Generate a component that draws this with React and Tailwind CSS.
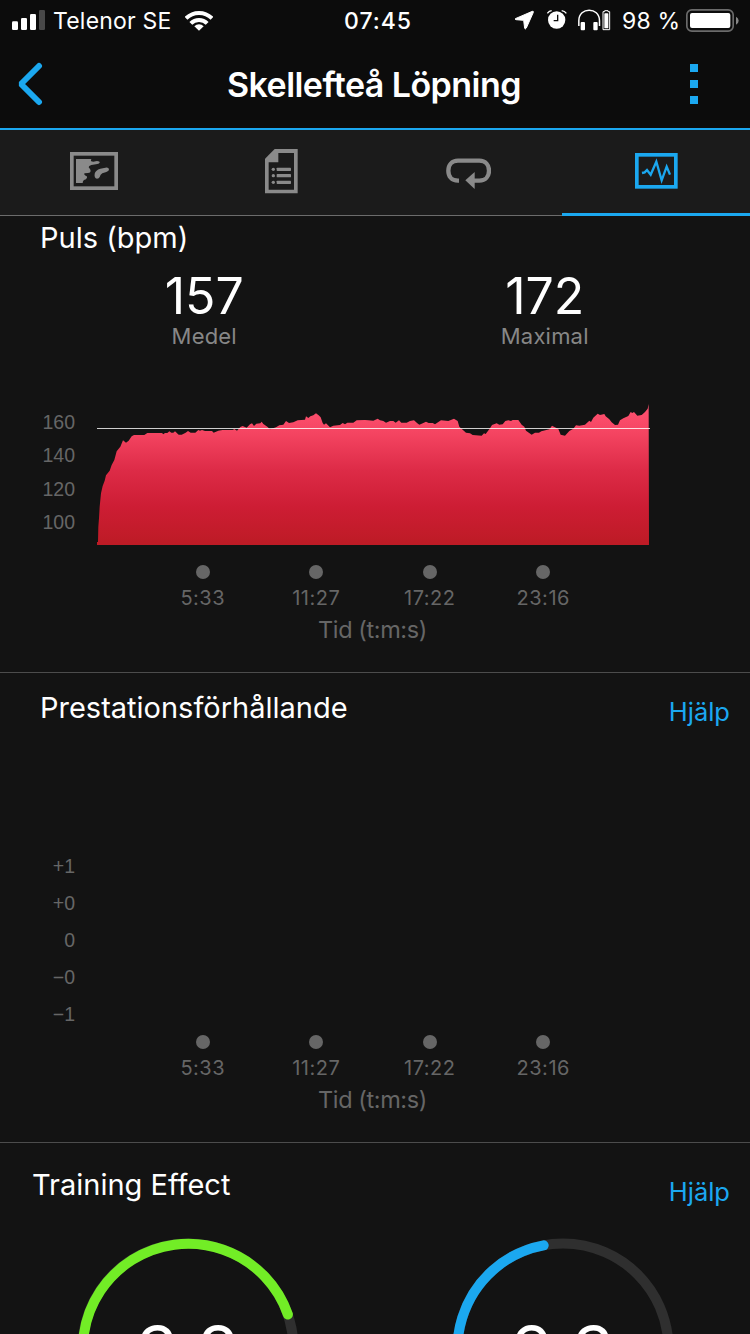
import React from 'react';

const FONT = 'font-[Inter,sans-serif]';

// Outline of the heart rate curve, three units per pixel
const firstHalf = [
  [201, 456], [204, 456], [205, 410], [207, 385], [209, 350], [213, 310], [218, 288], [224, 272], [228, 256],
  [239, 242], [245, 225], [253, 210], [260, 184], [271, 170], [279, 151], [288, 158], [296, 152], [305, 139],
  [312, 135], [343, 135], [352, 129], [396, 129], [400, 133], [405, 129], [412, 129], [418, 124], [424, 128],
  [430, 128], [435, 124], [446, 134], [455, 134], [467, 128], [474, 123], [482, 128], [496, 128], [505, 120],
  [510, 122], [516, 120], [525, 123], [546, 123], [551, 128], [565, 122], [578, 120], [608, 120], [613, 117],
  [621, 122], [631, 111], [638, 108], [650, 113], [660, 103], [666, 100], [672, 108], [679, 101], [691, 100],
  [695, 95], [700, 102], [712, 110], [720, 118], [738, 112], [748, 106], [760, 104], [768, 93], [777, 99],
  [790, 97], [803, 91], [825, 89], [828, 79], [835, 84], [841, 79], [850, 76], [858, 70], [866, 76],
  [872, 82], [878, 99], [882, 104], [888, 100], [900, 112], [910, 107],
];

const secondHalf = [
  [0, 105], [8, 99], [15, 103], [22, 98], [40, 98], [50, 91], [75, 90], [85, 91], [100, 92], [113, 86],
  [120, 91], [130, 93], [138, 98], [150, 93], [160, 93], [167, 98], [177, 91], [184, 98], [200, 98],
  [210, 93], [222, 91], [232, 100], [238, 104], [250, 99], [258, 95], [266, 99], [278, 99], [285, 103],
  [303, 91], [325, 93], [342, 86], [353, 93], [358, 110], [378, 128], [390, 130], [398, 135], [425, 137],
  [432, 130], [437, 132], [450, 115], [456, 105], [470, 100], [478, 104], [488, 103], [496, 93], [505, 91],
  [513, 93], [518, 90], [535, 90], [545, 104], [553, 110], [558, 122], [575, 134], [585, 128], [597, 128],
  [604, 124], [628, 118], [636, 107], [655, 117], [662, 134], [675, 137], [688, 123], [700, 116], [708, 106],
  [718, 107], [735, 104], [748, 92], [753, 96], [760, 83], [773, 71], [780, 75], [793, 72], [797, 79],
  [808, 88], [815, 97], [825, 105], [834, 104], [840, 91], [850, 85], [865, 78], [872, 66], [877, 69],
  [882, 66], [892, 77], [905, 75], [915, 66], [923, 56], [926, 42],
];

const curve = [
  [201, 465],
  ...firstHalf,
  ...secondHalf.map(([x, y]) => [x + 930, y]),
  [1857, 465],
];

const times = ['5:33', '11:27', '17:22', '23:16'];

const StatusBar = () => (
  <div className="flex h-10 items-center text-[23px] leading-none text-white">
    <svg className="ml-3 h-5 w-[33px] shrink-0" viewBox="36 30 99 60">
      <rect x="36" y="64" width="18" height="26" rx="4" fill="#fff" />
      <rect x="63" y="54" width="18" height="36" rx="4" fill="#fff" />
      <rect x="90" y="42" width="18" height="48" rx="4" fill="#fff" />
      <rect x="117" y="30" width="18" height="60" rx="4" fill="#484848" />
    </svg>
    <span className="ml-2 w-[132px] whitespace-nowrap pt-0.5 tracking-[0.2px]">Telenor SE</span>
    <svg className="h-[21px] w-7 shrink-0" viewBox="555 28 84 63">
      <g fill="none" stroke="#fff" strokeWidth="12">
        <path d="M558 53A55 55 0 0 1 636 53" />
        <path d="M572.500 68A34.500 34.500 0 0 1 621.500 68" />
      </g>
      <path d="M583 76.500A19.500 19.500 0 0 1 611 76.500L597 90.500Z" fill="#fff" />
    </svg>
    <span className="ml-[131px] w-[170px] whitespace-nowrap pt-0.5 font-medium tracking-[1px]">07:45</span>
    <svg className="ml-px h-5 w-[19px] shrink-0" viewBox="45 33 57 60">
      <path d="M97 37L46 59Q44 61 48 62L71 64L74 88Q76 92 79 87L100 40Q101 36 97 37Z" fill="#fff" stroke="#fff" strokeWidth="3" strokeLinejoin="round" />
    </svg>
    <svg className="ml-[13px] h-5 w-5 shrink-0" viewBox="140 31 60 60">
      <circle cx="169" cy="61" r="26" fill="#fff" />
      <path d="M141 41Q146 34 154 33M184 33Q193 34 198 41" fill="none" stroke="#fff" strokeWidth="4" />
      <path d="M172 45V63H160" fill="none" stroke="#0c0c0c" strokeWidth="4" />
    </svg>
    <svg className="ml-[11px] h-[22px] w-[33px] shrink-0" viewBox="233 27 99 66">
      <path d="M235.500 78V62C235.500 20 297.500 20 297.500 62V78" fill="none" stroke="#fff" strokeWidth="4.500" />
      <rect x="241" y="66" width="13" height="25" rx="3" fill="#fff" />
      <rect x="279" y="66" width="13" height="25" rx="3" fill="#fff" />
      <path d="M313 32H323V35H328V89H308V35H313Z" fill="none" stroke="#fff" strokeWidth="3" />
      <rect x="312" y="40" width="12" height="45" rx="2" fill="#fff" />
    </svg>
    <span className="ml-[11px] w-[64px] whitespace-nowrap pt-0.5 tracking-[0.2px]">98 %</span>
    <svg className="h-[23px] w-[53px] shrink-0" viewBox="558 27 159 69">
      <rect x="560.500" y="29.500" width="139" height="64" rx="15" fill="none" stroke="#6b6b6b" strokeWidth="5" />
      <rect x="570" y="39" width="121" height="45" rx="6" fill="#fff" />
      <path d="M708 50Q716 54 716 62Q716 70 708 74Z" fill="#868686" />
    </svg>
  </div>
);

const Header = () => (
  <div className="flex h-[88px] items-center text-white">
    <svg className="ml-[17px] h-[44px] w-[27px]" viewBox="51 186 81 132">
      <path d="M117 198L63 252L117 306" fill="none" stroke="#1ba8f0" strokeWidth="18" strokeLinecap="round" strokeLinejoin="bevel" />
    </svg>
    <h1 className="ml-[183px] w-[463px] whitespace-nowrap pt-0.5 text-[34px] font-semibold leading-none tracking-[-0.55px]">
      Skellefteå Löpning
    </h1>
    <div className="mr-[52px] flex shrink-0 flex-col gap-2">
      <i className="h-2 w-2 bg-[#1ba8f0]" />
      <i className="h-2 w-2 bg-[#1ba8f0]" />
      <i className="h-2 w-2 bg-[#1ba8f0]" />
    </div>
  </div>
);

const Tabs = () => (
  <div className="grid h-[86px] grid-cols-4 border-b border-[#6c6c6c] bg-[#1b1b1b]">
    <div className="flex items-center justify-center pb-[3px]">
      <svg className="h-[38px] w-12" viewBox="60 66 144 114">
        <rect x="65.500" y="71.500" width="133" height="103" fill="none" stroke="#8a8a8a" strokeWidth="11" />
        <path d="M78 87H122Q126 88 123 91Q121 95 130 95L141 93Q150 93 149 98Q147 102 138 103L124 105Q116 107 116 112Q122 118 122 123Q122 129 114 129L104 130Q100 133 107 137Q113 139 111 143Q109 148 102 150Q98 153 98 159H78Z" fill="#8a8a8a" />
        <path d="M134 131Q137 120 151 116L166 113Q176 111 177 118Q178 123 169 126L157 130Q151 133 149 141Q147 146 141 146Q132 144 134 131Z" fill="#8a8a8a" />
      </svg>
    </div>
    <div className="flex items-center justify-center pb-[3px]">
      <svg className="h-[45px] w-[33px]" viewBox="645 56 99 135">
        <path d="M674 56H743V189H645V85Z" fill="#8a8a8a" />
        <path d="M685 68H732V178H656V96H685Z" fill="#1b1b1b" />
        <g fill="#8a8a8a">
          <circle cx="670" cy="117" r="5" />
          <circle cx="670" cy="136" r="5" />
          <circle cx="670" cy="156" r="5" />
          <rect x="680" y="112" width="43" height="10" rx="2" />
          <rect x="680" y="131" width="43" height="10" rx="2" />
          <rect x="680" y="151" width="43" height="10" rx="2" />
        </g>
      </svg>
    </div>
    <div className="flex items-center justify-center pt-px">
      <svg className="h-[31px] w-[45px]" viewBox="48 84 135 93">
        <path d="M87 152H84C64 152 55 138 55 122C55 106 65 92 84 92H148C167 92 177 106 177 122C177 138 167 152 148 152H130" fill="none" stroke="#8a8a8a" strokeWidth="13" />
        <path d="M106 151L134 126V177Z" fill="#8a8a8a" />
      </svg>
    </div>
    <div className="relative flex items-center justify-center pb-[3px]">
      <svg className="h-9 w-[43px]" viewBox="615 69 129 108">
        <rect x="620.500" y="74.500" width="117" height="96" fill="none" stroke="#1ba8f0" strokeWidth="11" />
        <path d="M636 129L644 127L651 120L662 134L679 95L695 151L710 110L720 134" fill="none" stroke="#1ba8f0" strokeWidth="7" />
      </svg>
      <span className="absolute -bottom-px -left-px right-0 h-[3px] bg-[#1ba8f0]" />
    </div>
  </div>
);

const Stat = ({ value, label }) => (
  <div className="flex flex-col items-center">
    <span className="text-[50px] leading-[51px] text-white">{value}</span>
    <span className="text-[22px] leading-[28px] tracking-[0.2px] text-[#878787]">{label}</span>
  </div>
);

const TimeAxis = () => (
  <>
    <div className="ml-[146px] grid w-[454px] grid-cols-4">
      {times.map((time) => (
        <div key={time} className="flex flex-col items-center">
          <span className="h-3.5 w-3.5 rounded-full bg-[#666]" />
          <span className="mt-[7px] text-[20px] leading-6 tracking-[0.5px] text-[#666]">{time}</span>
        </div>
      ))}
    </div>
    <p className="mt-1.5 w-[745px] text-center text-[23.5px] leading-[28px] tracking-[-0.4px] text-[#666]">Tid (t:m:s)</p>
  </>
);

const HeartRate = () => (
  <section className="h-[457px] border-b border-[#4c4c4c]">
    <h2 className="pl-10 text-[29px] leading-[43px]">Puls (bpm)</h2>
    <div className="ml-[34px] mt-3 grid w-[681px] grid-cols-2">
      <Stat value="157" label="Medel" />
      <Stat value="172" label="Maximal" />
    </div>
    <div className="mt-10 flex">
      <div className="flex w-[75px] flex-col pt-4 text-right font-['Liberation_Sans',sans-serif] text-[19.500px] leading-[33.400px] text-[#666]">
        <span>160</span>
        <span>140</span>
        <span>120</span>
        <span>100</span>
      </div>
      <svg className="ml-[22px] h-[155px] w-[553px]" viewBox="201 0 1659 465">
        <defs>
          <linearGradient id="pulse" gradientUnits="userSpaceOnUse" x1="0" y1="42" x2="0" y2="465">
            <stop offset="0" stopColor="#ff5272" />
            <stop offset="0.200" stopColor="#f54562" />
            <stop offset="0.470" stopColor="#dd2b47" />
            <stop offset="0.730" stopColor="#cd1d34" />
            <stop offset="1" stopColor="#bd1b25" />
          </linearGradient>
        </defs>
        <polygon points={curve.map((p) => p.join(',')).join(' ')} fill="url(#pulse)" />
        <rect x="201" y="114" width="1659" height="3" fill="#fff" fillOpacity="0.800" />
      </svg>
    </div>
    <div className="mt-5">
      <TimeAxis />
    </div>
  </section>
);

const Performance = () => (
  <section className="h-[470px] border-b border-[#4c4c4c]">
    <div className="flex justify-between pl-10 pr-5">
      <h2 className="mt-[13px] whitespace-nowrap text-[29px] leading-[43px]">Prestationsförhållande</h2>
      <a className="mt-[17px] text-[25.5px] leading-[43px] text-[#1ba8f0]">Hjälp</a>
    </div>
    <div className="mt-[115px] flex w-[75px] flex-col text-right font-['Liberation_Sans',sans-serif] text-[19.500px] leading-[37px] text-[#666]">
      <span>+1</span>
      <span>+0</span>
      <span>0</span>
      <span>−0</span>
      <span>−1</span>
    </div>
    <div className="mt-0.5">
      <TimeAxis />
    </div>
  </section>
);

const Gauge = ({ value, color, arc }) => (
  <div className="relative h-[222px] w-[222px]">
    <svg className="h-full w-full" viewBox="0 0 222 222" fill="none" strokeWidth="10" strokeLinecap="round">
      <path d="M36.400 185.600A105.500 105.500 0 1 1 185.600 185.600" stroke="#2f2f2f" />
      <path d={arc} stroke={color} />
    </svg>
    <span className="absolute inset-x-0 top-[78px] text-center text-[69px] leading-[70px] tracking-[0.6px]">{value}</span>
  </div>
);

const TrainingEffect = () => (
  <section className="h-[191px] overflow-hidden">
    <div className="flex justify-between pl-8 pr-5">
      <h2 className="mt-5 text-[29px] leading-[43px]">Training Effect</h2>
      <a className="mt-[27px] text-[25.5px] leading-[43px] text-[#1ba8f0]">Hjälp</a>
    </div>
    <div className="ml-[77px] mt-[25px] flex gap-[153px]">
      <Gauge value="3.8" color="#72ed26" arc="M36.400 185.600A105.500 105.500 0 1 1 210.900 76.500" />
      <Gauge value="2.3" color="#1ba8f0" arc="M36.400 185.600A105.500 105.500 0 0 1 91.700 7.300" />
    </div>
  </section>
);

const App = () => (
  <div className={`${FONT} h-[1334px] w-[750px] overflow-hidden bg-[#131313] text-white`}>
    <div className="border-b-2 border-[#1ba8f0] bg-[#0c0c0c]">
      <StatusBar />
      <Header />
    </div>
    <Tabs />
    <HeartRate />
    <Performance />
    <TrainingEffect />
  </div>
);

export default App;
